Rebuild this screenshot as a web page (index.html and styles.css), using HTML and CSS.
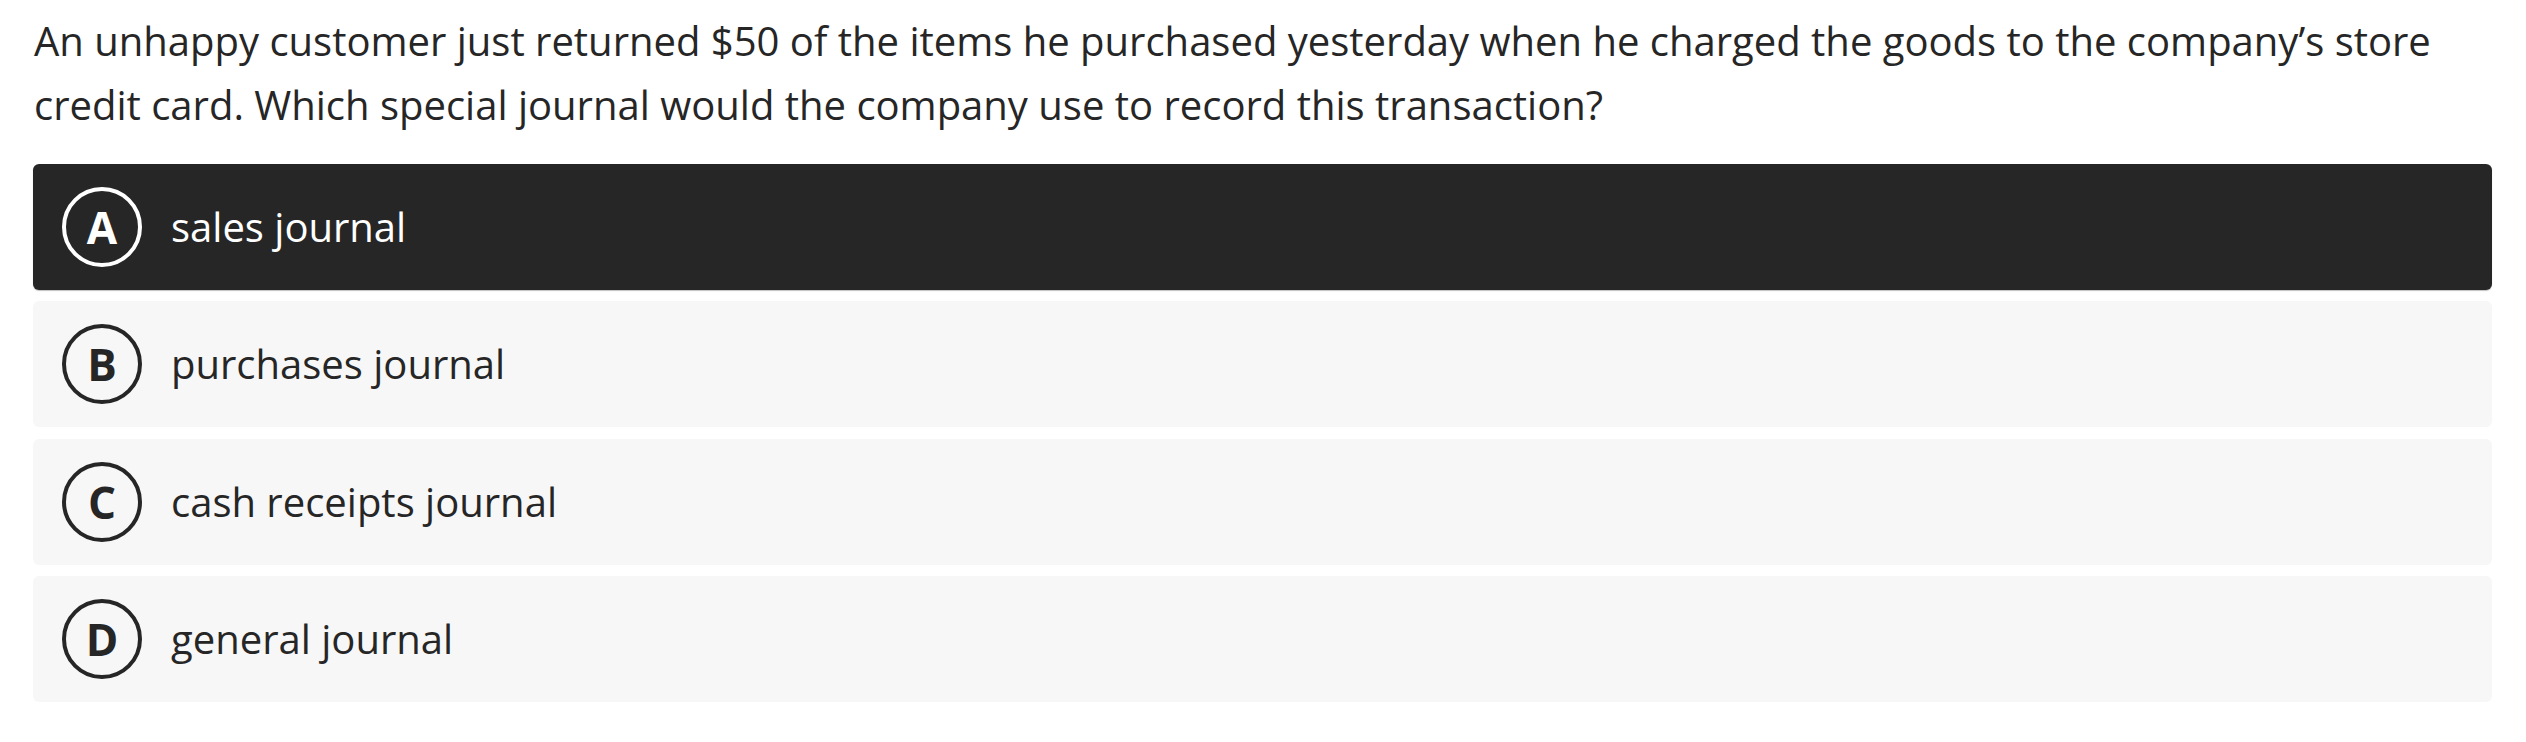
FILE: index.html
```html
<!DOCTYPE html>
<html lang="en">
<head>
<meta charset="utf-8">
<title>Question</title>
<link rel="stylesheet" href="styles.css">
</head>
<body>
<div class="quiz">
  <p class="question">An unhappy customer just returned $50 of the items he purchased yesterday when he charged the goods to the company’s store credit card. Which special journal would the company use to record this transaction?</p>
  <ul class="options">
    <li class="option selected"><span class="letter">A</span><span class="label">sales journal</span></li>
    <li class="option"><span class="letter">B</span><span class="label">purchases journal</span></li>
    <li class="option"><span class="letter">C</span><span class="label">cash receipts journal</span></li>
    <li class="option"><span class="letter">D</span><span class="label">general journal</span></li>
  </ul>
</div>
</body>
</html>
```
FILE: styles.css
```css
html, body {
  margin: 0;
  padding: 0;
  background: #ffffff;
}
body {
  font-family: "Open Sans", "Liberation Sans", sans-serif;
  color: #262626;
}
.quiz {
  padding: 8.5px 34px 0 33px;
}
.question {
  margin: 0 0 27.5px 1px;
  font-size: 40px;
  line-height: 64px;
}
.options {
  list-style: none;
  margin: 0;
  padding: 0;
  display: flex;
  flex-direction: column;
  gap: 11.3px;
}
.option {
  display: flex;
  align-items: center;
  gap: 29px;
  height: 126px;
  box-sizing: border-box;
  padding: 0 29px;
  background: #f7f7f7;
  border-radius: 6px;
  font-size: 40px;
}
.option.selected {
  background: #262626;
  color: #ffffff;
  box-shadow: 0 1px 1px rgba(0,0,0,0.25);
}
.letter {
  width: 80px;
  height: 80px;
  box-sizing: border-box;
  border: 4.5px solid currentColor;
  border-radius: 50%;
  display: flex;
  align-items: center;
  justify-content: center;
  font-weight: 700;
  font-size: 44px;
  line-height: 1;
  flex: none;
}
.label {
  line-height: 1;
}
```
